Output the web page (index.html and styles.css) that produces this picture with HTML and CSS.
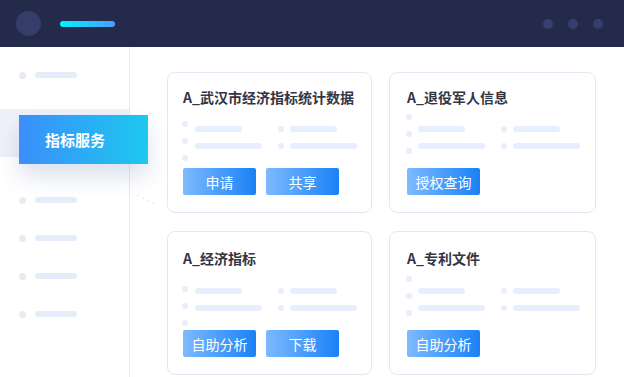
FILE: index.html
```html
<!DOCTYPE html>
<html lang="zh-CN">
<head>
<meta charset="utf-8">
<title>指标服务</title>
<link rel="stylesheet" href="styles.css">
</head>
<body>
<header class="topbar">
  <div class="avatar"></div>
  <div class="logo-bar"></div>
  <div class="top-dots">
    <span class="top-dot"></span>
    <span class="top-dot"></span>
    <span class="top-dot"></span>
  </div>
</header>
<div class="main">
  <aside class="sidebar">
    <div class="side-item first"><span class="side-dot"></span><span class="side-bar"></span></div>
    <div class="side-active">
      <div class="side-button">指标服务</div>
    </div>
    <div class="side-item after-active"><span class="side-dot"></span><span class="side-bar"></span></div>
    <div class="side-item"><span class="side-dot"></span><span class="side-bar"></span></div>
    <div class="side-item"><span class="side-dot"></span><span class="side-bar"></span></div>
    <div class="side-item"><span class="side-dot"></span><span class="side-bar"></span></div>
  </aside>
  <section class="content">
    <div class="trail">
      <span></span><span></span><span></span><span></span>
    </div>
    <div class="grid">
      <div class="card card-a">
        <div class="card-title">A_武汉市经济指标统计数据</div>
        <div class="card-body">
          <div class="dot-col dots-low"><span class="dot"></span><span class="dot"></span><span class="dot"></span></div>
          <div class="bar-col"><span class="bar short"></span><span class="bar long"></span></div>
          <div class="bar-col right"><div class="row"><span class="dot"></span><span class="bar short"></span></div><div class="row"><span class="dot"></span><span class="bar long"></span></div></div>
        </div>
        <div class="actions"><span class="btn">申请</span><span class="btn">共享</span></div>
      </div>
      <div class="card card-b">
        <div class="card-title">A_退役军人信息</div>
        <div class="card-body">
          <div class="dot-col dots-high"><span class="dot"></span><span class="dot"></span><span class="dot"></span></div>
          <div class="bar-col"><span class="bar short"></span><span class="bar long"></span></div>
          <div class="bar-col right"><div class="row"><span class="dot"></span><span class="bar short"></span></div><div class="row"><span class="dot"></span><span class="bar long"></span></div></div>
        </div>
        <div class="actions"><span class="btn">授权查询</span></div>
      </div>
      <div class="card card-a lower">
        <div class="card-title">A_经济指标</div>
        <div class="card-body">
          <div class="dot-col dots-low"><span class="dot"></span><span class="dot"></span><span class="dot"></span></div>
          <div class="bar-col"><span class="bar short"></span><span class="bar long"></span></div>
          <div class="bar-col right"><div class="row"><span class="dot"></span><span class="bar short"></span></div><div class="row"><span class="dot"></span><span class="bar long"></span></div></div>
        </div>
        <div class="actions"><span class="btn">自助分析</span><span class="btn">下载</span></div>
      </div>
      <div class="card card-b lower">
        <div class="card-title">A_专利文件</div>
        <div class="card-body">
          <div class="dot-col dots-high"><span class="dot"></span><span class="dot"></span><span class="dot"></span></div>
          <div class="bar-col"><span class="bar short"></span><span class="bar long"></span></div>
          <div class="bar-col right"><div class="row"><span class="dot"></span><span class="bar short"></span></div><div class="row"><span class="dot"></span><span class="bar long"></span></div></div>
        </div>
        <div class="actions"><span class="btn">自助分析</span></div>
      </div>
    </div>
  </section>
</div>
</body>
</html>
```
FILE: styles.css
```css
* { box-sizing: border-box; }
html, body { margin: 0; padding: 0; }
body {
  width: 624px;
  height: 377px;
  overflow: hidden;
  background: #ffffff;
  font-family: "Noto Sans CJK SC", "Noto Sans", sans-serif;
}

.topbar {
  height: 47px;
  background: #242a4a;
  display: flex;
  align-items: center;
  padding: 0 21px 0 16px;
}
.avatar {
  width: 25px;
  height: 25px;
  border-radius: 50%;
  background: #363d6b;
}
.logo-bar {
  width: 55px;
  height: 6px;
  border-radius: 3px;
  margin-left: 19px;
  background: linear-gradient(90deg, #00f2ff, #4a9bff);
}
.top-dots {
  margin-left: auto;
  display: flex;
  gap: 15px;
}
.top-dot {
  width: 10px;
  height: 10px;
  border-radius: 50%;
  background: #383f6e;
}

.main {
  display: flex;
  height: 330px;
}
.sidebar {
  width: 130px;
  flex: none;
  border-right: 1px solid #e8ebf4;
  padding-top: 9px;
  position: relative;
  z-index: 2;
}
.side-item {
  height: 38px;
  display: flex;
  align-items: center;
  padding-left: 19px;
}
.side-item.after-active { margin-top: 24px; }
.side-dot {
  width: 7px;
  height: 7px;
  border-radius: 50%;
  background: #e7ebf6;
}
.side-bar {
  width: 42px;
  height: 6px;
  border-radius: 3px;
  margin-left: 9px;
  background: #e5edfb;
}
.side-active {
  margin-top: 15px;
  height: 48px;
  width: 129px;
  background: #eff1fa;
  position: relative;
}
.side-button {
  position: absolute;
  left: 19px;
  top: 6px;
  width: 129px;
  height: 49px;
  padding-left: 26px;
  display: flex;
  align-items: center;
  color: #ffffff;
  font-size: 15px;
  font-weight: 700;
  background: linear-gradient(90deg, #3b8ffa, #1cc8ef);
  box-shadow: 0 12px 22px rgba(40, 70, 140, 0.16);
}

.content {
  flex: 1;
  padding: 25px 0 0 37px;
  position: relative;
}
.trail {
  position: absolute;
  left: 7px;
  top: 147px;
  width: 20px;
  height: 12px;
}
.trail span {
  position: absolute;
  width: 2px;
  height: 2px;
  border-radius: 50%;
  background: #eceef3;
}
.trail span:nth-child(1) { left: 0; top: 0; }
.trail span:nth-child(2) { left: 5px; top: 3px; }
.trail span:nth-child(3) { left: 10px; top: 6px; }
.trail span:nth-child(4) { left: 15px; top: 8px; }

.grid {
  display: grid;
  grid-template-columns: 205px 207px;
  grid-template-rows: 141px 144px;
  column-gap: 17px;
  row-gap: 18px;
}
.card {
  border: 1px solid #e6e7f5;
  border-radius: 8px;
  padding: 14px 15px 0 15px;
  background: #ffffff;
}
.card-b { padding-left: 17px; }
.card.lower { padding-top: 16px; }

.card-title {
  font-size: 14px;
  line-height: 20px;
  font-weight: 700;
  color: #333544;
  white-space: nowrap;
}

.card-body {
  height: 61px;
  display: flex;
  align-items: flex-start;
}
.lower .card-body { height: 62px; }
.dot-col {
  display: flex;
  flex-direction: column;
  gap: 11px;
  margin-left: -1px;
}
.dots-low { padding-top: 14px; }
.dots-high { padding-top: 7px; }
.lower .dots-low { padding-top: 18px; }
.lower .dots-high { padding-top: 8px; }
.dot {
  width: 6px;
  height: 6px;
  border-radius: 50%;
  background: #e7eefb;
  flex: none;
}
.bar-col {
  display: flex;
  flex-direction: column;
  gap: 11px;
  padding-top: 19px;
  margin-left: 7px;
}
.lower .bar-col { padding-top: 20px; }
.card-b .bar-col { margin-left: 6px; }
.bar-col.right { margin-left: 16px; }
.row {
  display: flex;
  align-items: center;
  gap: 6px;
}
.bar {
  height: 6px;
  border-radius: 3px;
  background: #e6effd;
}
.bar.short { width: 47px; }
.bar.long { width: 67px; }

.actions {
  display: flex;
  gap: 10px;
}
.btn {
  width: 73px;
  height: 27px;
  border-radius: 2px;
  display: flex;
  align-items: center;
  justify-content: center;
  color: #ffffff;
  font-size: 14px;
  background: linear-gradient(90deg, #7dbaff, #1a81f6);
}
```
